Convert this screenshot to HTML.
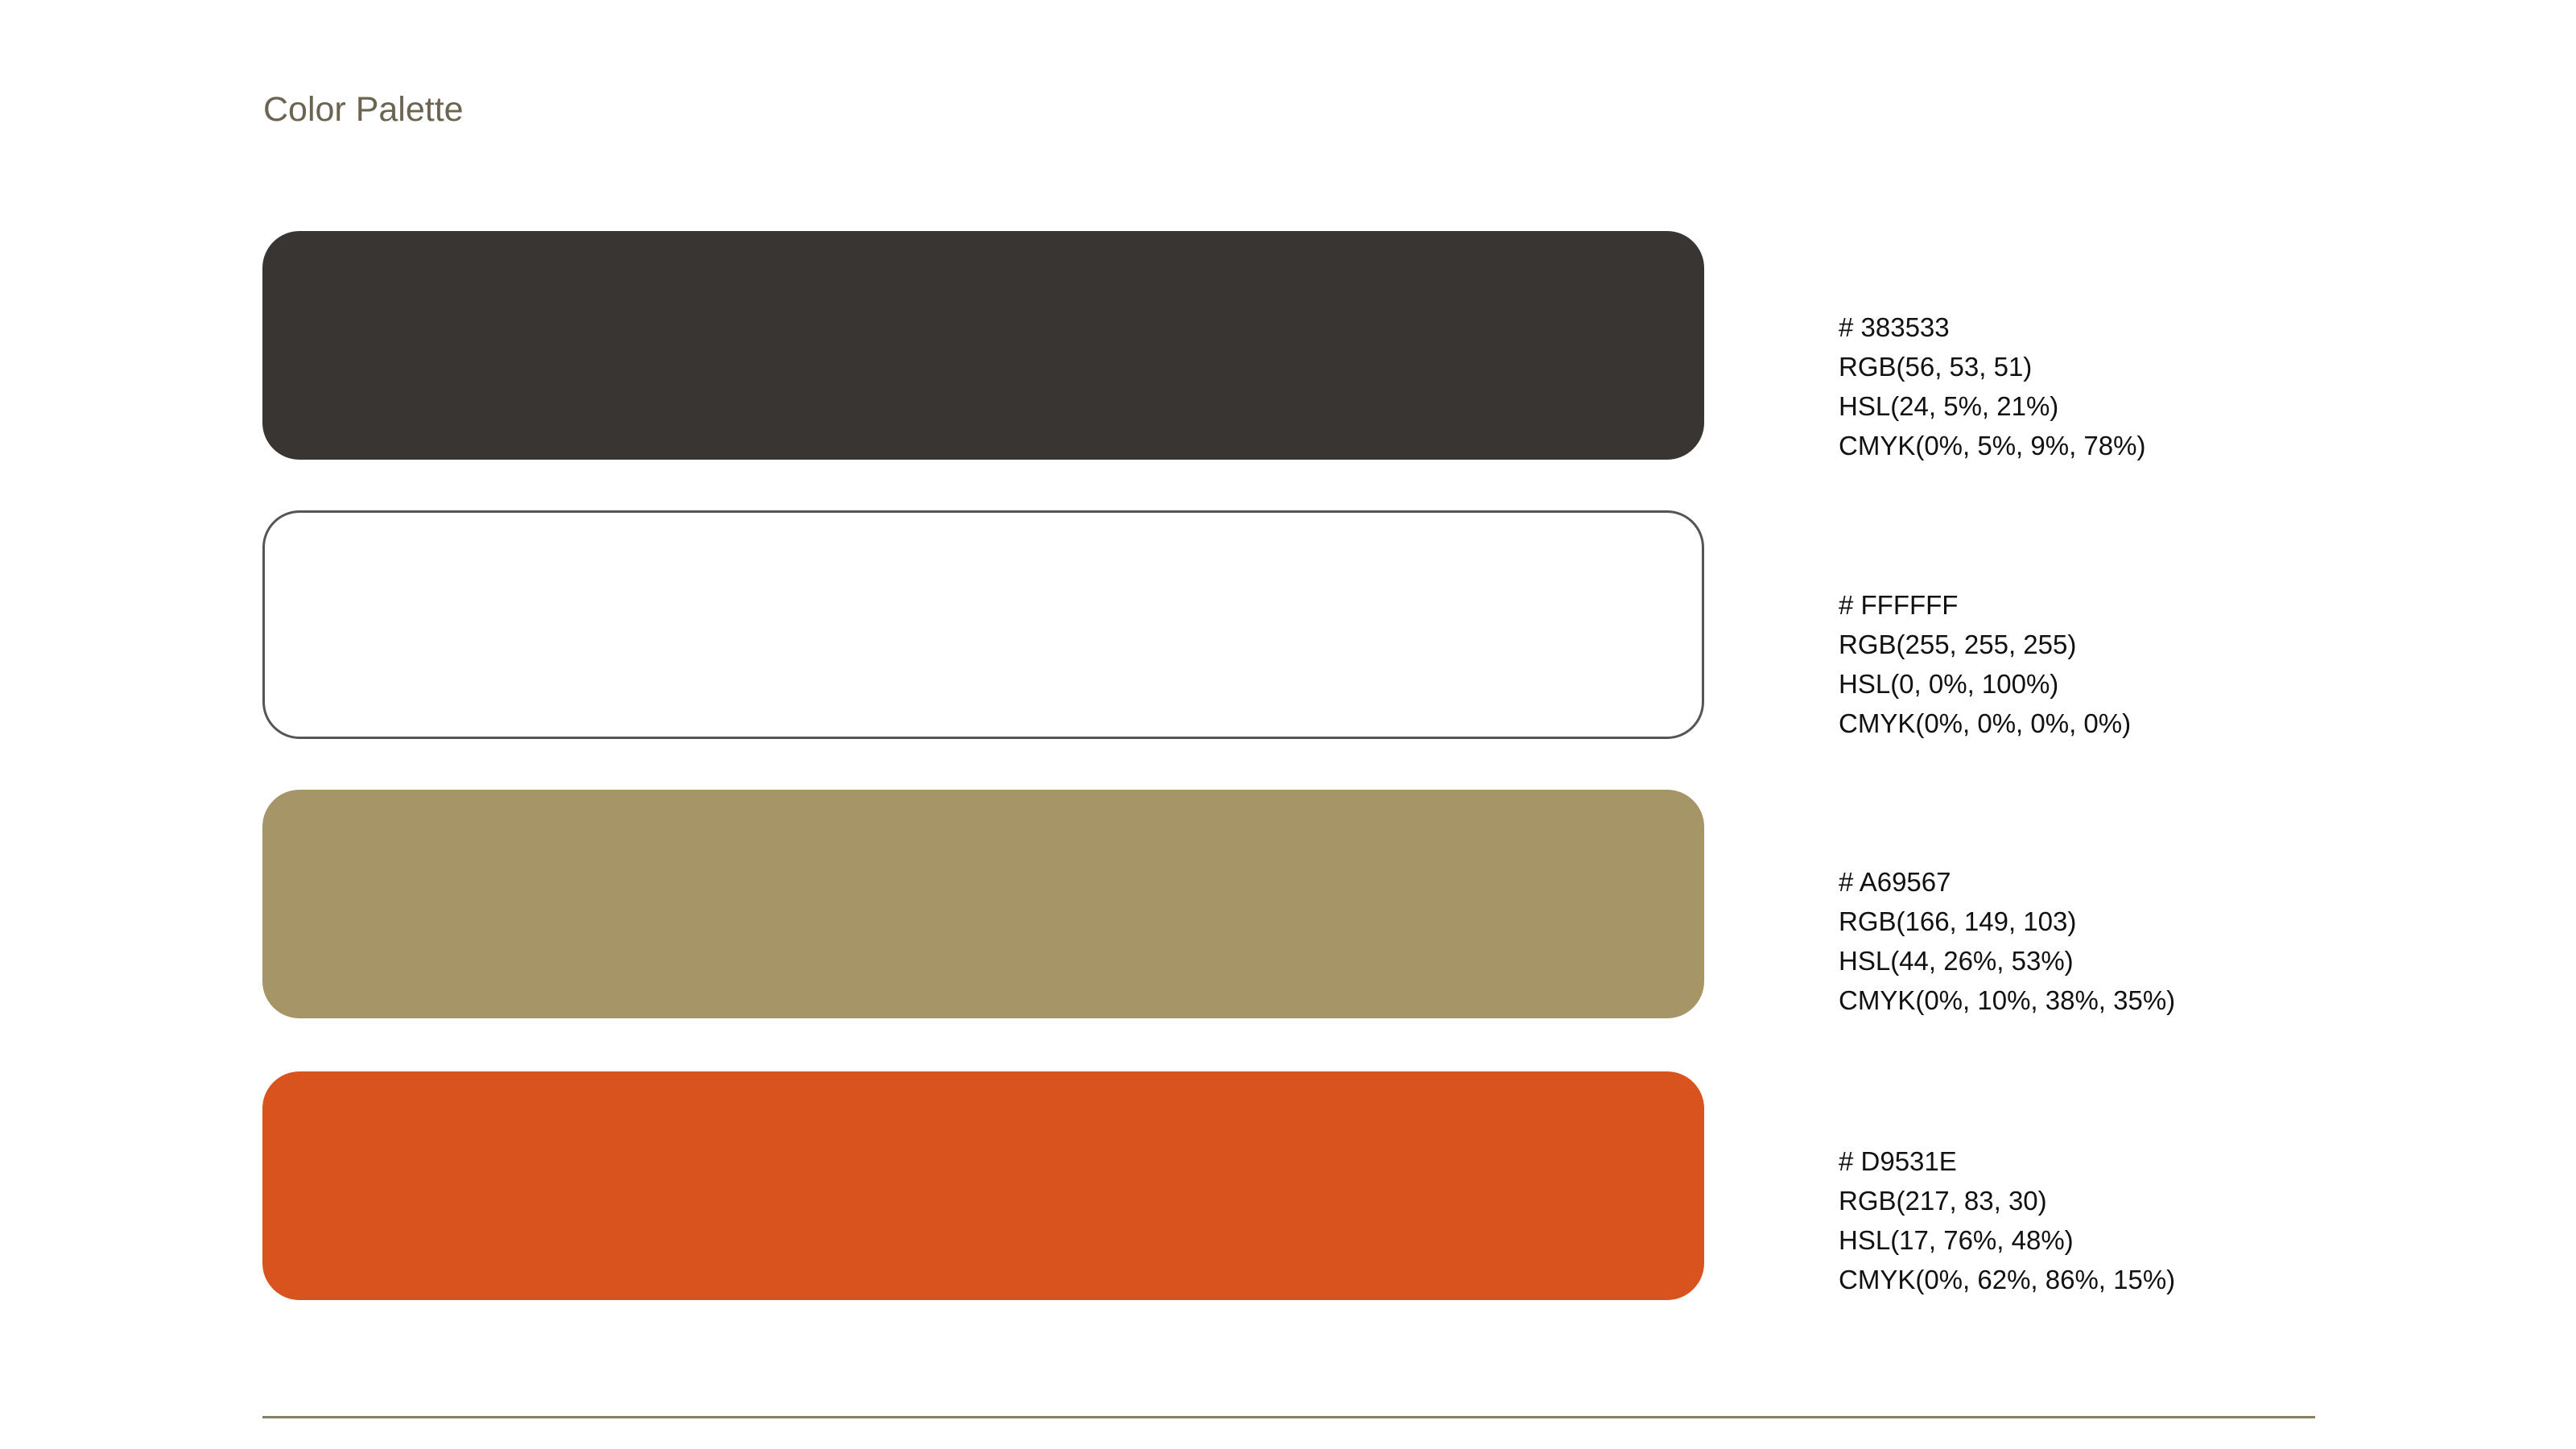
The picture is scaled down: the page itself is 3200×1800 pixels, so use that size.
<!DOCTYPE html>
<html><head><meta charset="utf-8"><style>
html,body{margin:0;padding:0;background:#fff;}
body{width:3200px;height:1800px;position:relative;overflow:hidden;font-family:"Liberation Sans",sans-serif;}
.title{position:absolute;left:327px;top:112px;font-size:43px;color:#6b6450;}
.sw{position:absolute;left:326px;width:1791px;height:284px;border-radius:46px;box-sizing:border-box;}
.info{position:absolute;left:2284px;font-size:33px;line-height:49px;color:#111;}
.line{position:absolute;left:326px;top:1759px;width:2550px;height:3px;background:#8a8060;}
</style></head><body>
<div class="title">Color Palette</div>
<div class="sw" style="top:287px;background:#383533"></div>
<div class="sw" style="top:634px;background:#fff;border:3px solid #555"></div>
<div class="sw" style="top:981px;background:#a69567"></div>
<div class="sw" style="top:1331px;background:#d9531e"></div>
<div class="info" style="top:382px"># 383533<br>RGB(56, 53, 51)<br>HSL(24, 5%, 21%)<br>CMYK(0%, 5%, 9%, 78%)</div>
<div class="info" style="top:727px"># FFFFFF<br>RGB(255, 255, 255)<br>HSL(0, 0%, 100%)<br>CMYK(0%, 0%, 0%, 0%)</div>
<div class="info" style="top:1071px"># A69567<br>RGB(166, 149, 103)<br>HSL(44, 26%, 53%)<br>CMYK(0%, 10%, 38%, 35%)</div>
<div class="info" style="top:1418px"># D9531E<br>RGB(217, 83, 30)<br>HSL(17, 76%, 48%)<br>CMYK(0%, 62%, 86%, 15%)</div>
<div class="line"></div>
</body></html>
